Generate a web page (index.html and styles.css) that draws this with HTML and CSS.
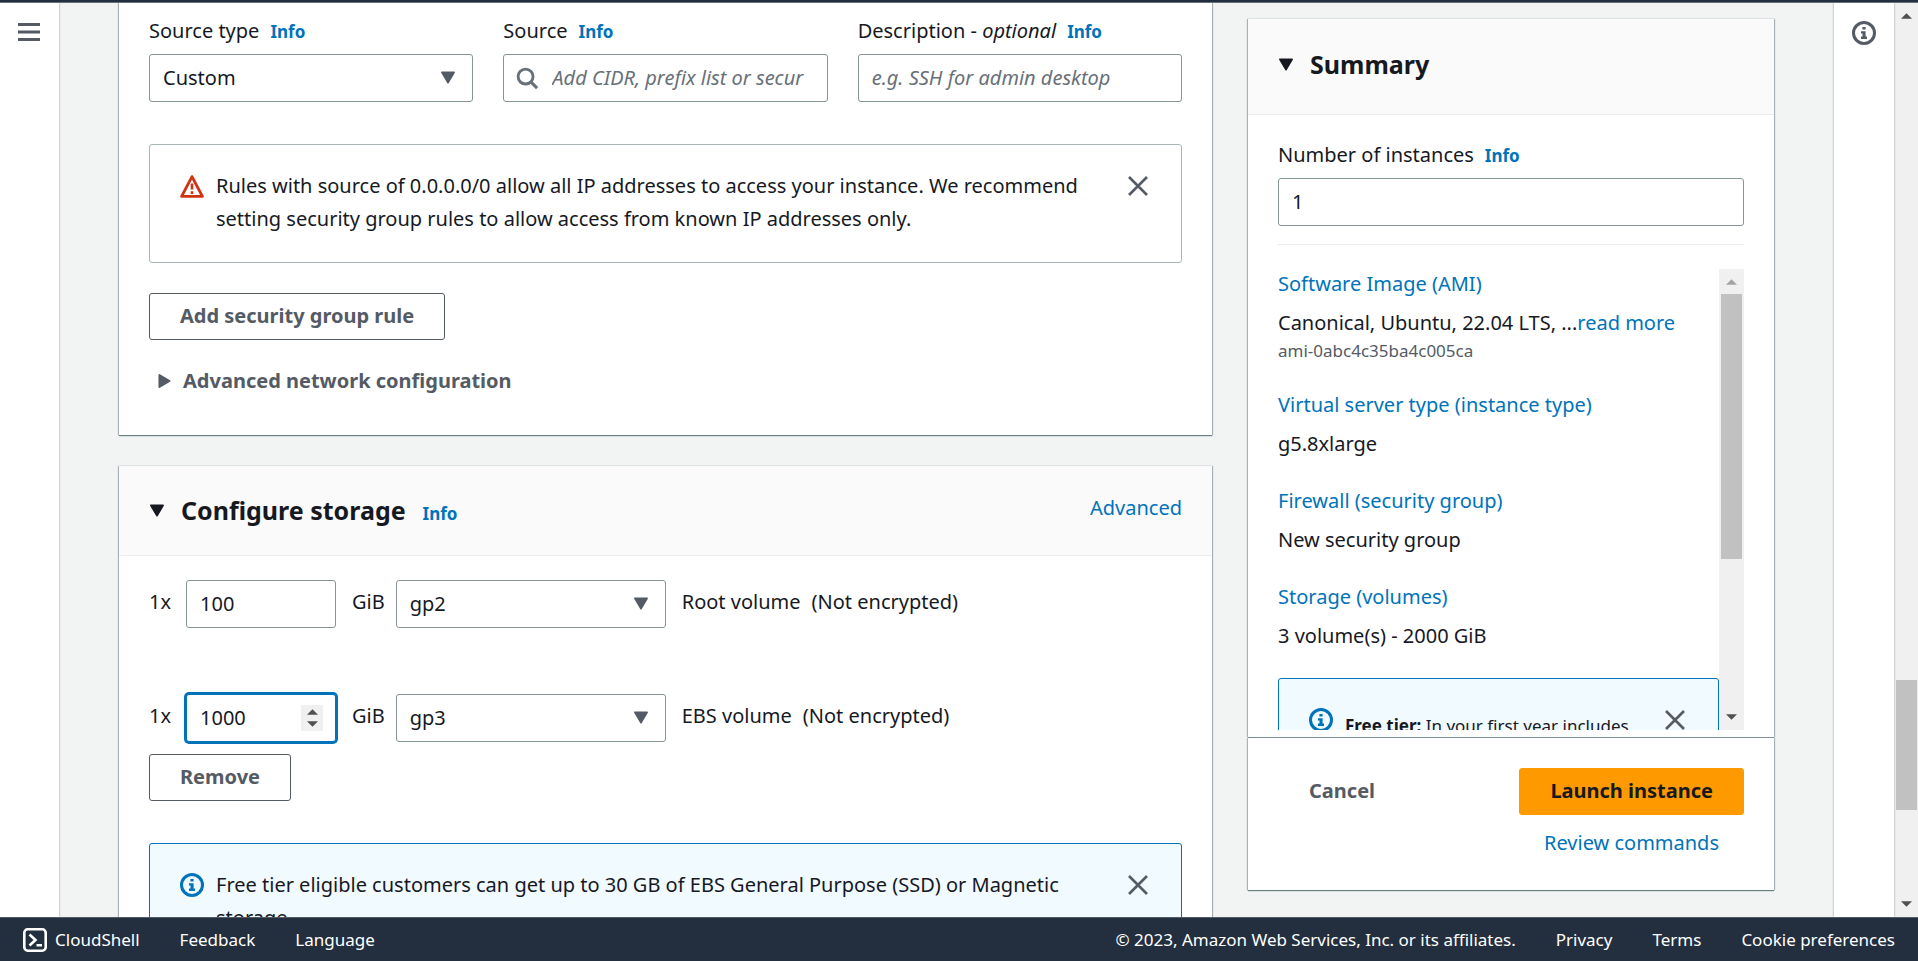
FILE: index.html
```html
<!DOCTYPE html>
<html lang="en">
<head>
<meta charset="utf-8">
<title>Launch an instance | EC2</title>
<link rel="stylesheet" href="styles.css">
</head>
<body>
<svg class="sprite" aria-hidden="true">
  <symbol id="i-caret" viewBox="0 0 16 14"><path d="M1.5 1.5h13L8 12.5z" fill="currentColor" stroke="currentColor" stroke-width="2" stroke-linejoin="round"/></symbol>
  <symbol id="i-right" viewBox="0 0 14 16"><path d="M1.5 1.5v13L12.5 8z" fill="currentColor" stroke="currentColor" stroke-width="2" stroke-linejoin="round"/></symbol>
  <symbol id="i-close" viewBox="0 0 20 20"><path d="M1 1l18 18M19 1L1 19" fill="none" stroke="currentColor" stroke-width="2.6"/></symbol>
  <symbol id="i-info" viewBox="0 0 24 24"><circle cx="12" cy="12" r="10.5" fill="none" stroke="currentColor" stroke-width="3"/><path d="M10.4 6h3.2v2.6h-3.2zM9 10.2h4.6v5.4H15V18H9v-2.4h1.5v-3H9z" fill="currentColor"/></symbol>
  <symbol id="i-warn" viewBox="0 0 24 24"><path d="M12 2.6L22.4 22.4H1.6z" fill="none" stroke="currentColor" stroke-width="2.8" stroke-linejoin="round"/><path d="M12 9.4v6.2M12 17.2v2.8" fill="none" stroke="currentColor" stroke-width="2.6"/></symbol>
  <symbol id="i-search" viewBox="0 0 24 24"><circle cx="10" cy="10" r="7.8" fill="none" stroke="currentColor" stroke-width="3"/><path d="M15.5 15.5l6.5 6.5" fill="none" stroke="currentColor" stroke-width="3.2"/></symbol>
  <symbol id="i-menu" viewBox="0 0 22 18"><path d="M0 1.5h22M0 9h22M0 16.5h22" stroke="currentColor" stroke-width="2.8"/></symbol>
  <symbol id="i-shell" viewBox="0 0 24 24"><rect x="1.3" y="1.3" width="21.4" height="21.4" rx="3.4" fill="none" stroke="currentColor" stroke-width="2.6"/><path d="M6.5 6.5l6 5.5-6 5.5M13.5 17.3h5.5" fill="none" stroke="currentColor" stroke-width="2.6"/></symbol>
  <symbol id="i-tri" viewBox="0 0 12 6"><path d="M0 6L6 0l6 6z" fill="currentColor"/></symbol>
</svg>

<div class="topbar"></div>

<div class="shell">
  <nav class="rail rail-left">
    <button class="icon-btn" aria-label="Open navigation"><svg class="menu-icon"><use href="#i-menu"/></svg></button>
  </nav>

  <main class="content">
    <div class="forms">
      <section class="card card-network">
        <div class="fields">
          <div class="field">
            <div class="label-row"><label for="stype">Source type</label><a class="info" href="#">Info</a></div>
            <div class="select"><select id="stype"><option>Custom</option></select><svg class="caret"><use href="#i-caret"/></svg></div>
          </div>
          <div class="field">
            <div class="label-row"><label for="src">Source</label><a class="info" href="#">Info</a></div>
            <div class="search"><svg class="search-icon"><use href="#i-search"/></svg><input class="input" id="src" type="text" placeholder="Add CIDR, prefix list or secur"></div>
          </div>
          <div class="field">
            <div class="label-row"><label for="desc">Description - <i>optional</i></label><a class="info" href="#">Info</a></div>
            <input class="input" id="desc" type="text" placeholder="e.g. SSH for admin desktop">
          </div>
        </div>

        <div class="alert alert-warn">
          <svg class="alert-icon"><use href="#i-warn"/></svg>
          <p class="alert-text">Rules with source of 0.0.0.0/0 allow all IP addresses to access your instance. We recommend setting security group rules to allow access from known IP addresses only.</p>
          <button class="icon-btn" aria-label="Dismiss"><svg class="close-icon"><use href="#i-close"/></svg></button>
        </div>

        <button class="btn">Add security group rule</button>
        <button class="expander"><svg class="right-icon"><use href="#i-right"/></svg>Advanced network configuration</button>
      </section>

      <section class="card card-storage">
        <header class="card-head">
          <svg class="caret"><use href="#i-caret"/></svg>
          <h2>Configure storage</h2>
          <a class="info" href="#">Info</a>
          <a class="link head-link" href="#">Advanced</a>
        </header>
        <div class="card-body">
          <div class="volume">
            <label for="v1">1x</label>
            <input class="input size" id="v1" type="number" value="100">
            <label for="t1">GiB</label>
            <div class="select type"><select id="t1"><option>gp2</option></select><svg class="caret"><use href="#i-caret"/></svg></div>
            <span>Root volume</span><span>(Not encrypted)</span>
          </div>
          <div class="volume volume-next">
            <label for="v2">1x</label>
            <div class="stepper">
              <input class="input size focused" id="v2" type="number" value="1000">
              <span class="spin"><svg class="tri"><use href="#i-tri"/></svg><svg class="tri down"><use href="#i-tri"/></svg></span>
            </div>
            <label for="t2">GiB</label>
            <div class="select type"><select id="t2"><option>gp3</option></select><svg class="caret"><use href="#i-caret"/></svg></div>
            <span>EBS volume</span><span>(Not encrypted)</span>
          </div>
          <button class="btn btn-remove">Remove</button>
          <div class="alert alert-info">
            <svg class="alert-icon"><use href="#i-info"/></svg>
            <p class="alert-text">Free tier eligible customers can get up to 30 GB of EBS General Purpose (SSD) or Magnetic storage</p>
            <button class="icon-btn" aria-label="Dismiss"><svg class="close-icon"><use href="#i-close"/></svg></button>
          </div>
        </div>
      </section>
    </div>

    <aside class="summary">
      <section class="card summary-card">
        <header class="card-head summary-head">
          <svg class="caret"><use href="#i-caret"/></svg>
          <h2>Summary</h2>
        </header>
        <div class="summary-body">
          <div class="label-row"><label for="count">Number of instances</label><a class="info" href="#">Info</a></div>
          <input class="input" id="count" type="number" value="1">
          <hr class="rule">
          <div class="scroller">
            <div class="scroll-view">
              <dl class="facts">
                <dt><a class="link" href="#">Software Image (AMI)</a></dt>
                <dd>Canonical, Ubuntu, 22.04 LTS, ...<a class="link" href="#">read more</a><small>ami-0abc4c35ba4c005ca</small></dd>
                <dt><a class="link" href="#">Virtual server type (instance type)</a></dt>
                <dd>g5.8xlarge</dd>
                <dt><a class="link" href="#">Firewall (security group)</a></dt>
                <dd>New security group</dd>
                <dt><a class="link" href="#">Storage (volumes)</a></dt>
                <dd>3 volume(s) - 2000 GiB</dd>
              </dl>
              <div class="alert alert-info alert-tier">
                <svg class="alert-icon"><use href="#i-info"/></svg>
                <p class="alert-text tier-text"><b>Free tier:</b> In your first year includes</p>
                <button class="icon-btn" aria-label="Dismiss"><svg class="close-icon"><use href="#i-close"/></svg></button>
              </div>
            </div>
            <div class="bar">
              <svg class="tri faded"><use href="#i-tri"/></svg>
              <div class="track"><div class="thumb thumb-inner"></div></div>
              <svg class="tri down"><use href="#i-tri"/></svg>
            </div>
          </div>
        </div>
      </section>
      <section class="card actions">
        <div class="action-row">
          <button class="btn btn-plain">Cancel</button>
          <button class="btn btn-primary">Launch instance</button>
        </div>
        <a class="link review" href="#">Review commands</a>
      </section>
    </aside>
  </main>

  <aside class="rail rail-right">
    <button class="icon-btn" aria-label="Open help panel"><svg class="alert-icon"><use href="#i-info"/></svg></button>
  </aside>
  <div class="bar page-bar">
    <svg class="tri"><use href="#i-tri"/></svg>
    <div class="track page-track"><div class="thumb thumb-page"></div></div>
    <svg class="tri down"><use href="#i-tri"/></svg>
  </div>
</div>

<footer class="footer">
  <div class="foot-group">
    <a class="foot-shell" href="#"><svg class="shell-icon"><use href="#i-shell"/></svg>CloudShell</a>
    <a href="#">Feedback</a>
    <a href="#">Language</a>
  </div>
  <div class="foot-group">
    <span>© 2023, Amazon Web Services, Inc. or its affiliates.</span>
    <a href="#">Privacy</a>
    <a href="#">Terms</a>
    <a href="#">Cookie preferences</a>
  </div>
</footer>
</body>
</html>
```
FILE: styles.css
```css
* { box-sizing: border-box; }

body {
  margin: 0;
  height: 100vh;
  overflow: hidden;
  display: flex;
  flex-direction: column;
  font-family: "Noto Sans", "Open Sans", sans-serif;
  font-size: 20px;
  line-height: 33px;
  color: #16191f;
  background: #f2f3f3;
}

.sprite { display: none; }
svg { flex: none; display: block; }
a { text-decoration: none; color: inherit; }
button, input, select { font: inherit; color: inherit; }
p, h2, dl, dd { margin: 0; }

.topbar { flex: none; height: 3px; background: #232f3e; border-bottom: 1px solid #687078; }

.shell { flex: 1; min-height: 0; display: flex; overflow: hidden; }

.rail { flex: none; background: #fff; color: #545b64; padding-top: 17px; box-shadow: 0 0 2px #879596; z-index: 1; }
.rail-left { width: 59px; padding-left: 18px; }
.rail-right { width: 60px; padding-left: 18px; }
.icon-btn { border: 0; background: none; padding: 0; color: #545b64; flex: none; }
.rail .icon-btn { display: block; }
.menu-icon { width: 22px; height: 18px; margin-top: 3px; }

.content { flex: 1; min-width: 0; display: flex; gap: 36px; padding: 0 60px; }
.forms { flex: 1; min-width: 0; }

.card { background: #fff; box-shadow: 0 1px 1px #687f83, -1px 0 1px #b4bdc0, 1px 0 1px #b4bdc0; }
.card-network { padding: 11px 30px 38px; }

.fields { display: grid; grid-template-columns: repeat(3, 1fr); gap: 30px; }
.label-row { display: flex; align-items: baseline; gap: 11px; }
.field { min-width: 0; }
.field .label-row { margin-bottom: 6px; }
.info { color: #0073bb; font-weight: 700; font-size: 17px; }
.link { color: #0073bb; }

.input, .select select {
  display: block;
  width: 100%;
  height: 48px;
  border: 1px solid #879596;
  border-radius: 3px;
  background: #fff;
  padding: 0 13px 2px;
  appearance: none;
}
.input[type="number"] { appearance: textfield; }
.input::-webkit-inner-spin-button { display: none; }
.input::placeholder { color: #687078; font-style: italic; opacity: 1; }
.select { position: relative; }
.caret { width: 16px; height: 13px; }
.select .caret { position: absolute; right: 17px; top: 17px; color: #545b64; pointer-events: none; }
.search { position: relative; }
.search .input { padding-left: 48px; }
.search-icon { position: absolute; left: 13px; top: 13px; width: 23px; height: 23px; color: #687078; }

.alert { display: flex; align-items: flex-start; border: 1px solid #aab7b8; border-radius: 3px; padding: 24px 33px 27px 30px; }
.alert-icon { width: 24px; height: 24px; margin-top: 5px; }
.rail .alert-icon { margin-top: 1px; }
.alert-text { flex: 1; padding: 0 30px 0 12px; }
.alert-warn { margin: 42px 0 30px; }
.alert-warn .alert-icon { color: #d13212; }
.alert-info { border-color: #0073bb; background: #f1faff; }
.alert-info .alert-icon { color: #0073bb; }
.close-icon { width: 20px; height: 20px; margin-top: 7px; }

.btn {
  display: block;
  height: 47px;
  padding: 0 30px 2px;
  border: 1px solid #545b64;
  border-radius: 3px;
  background: #fff;
  color: #545b64;
  font-weight: 700;
}
.expander { display: flex; align-items: center; gap: 12px; margin-top: 24px; padding: 0 0 0 9px; border: 0; background: none; color: #545b64; font-weight: 700; }
.right-icon { width: 13px; height: 16px; }

.card-storage { margin-top: 31px; }
.card-head { display: flex; align-items: center; height: 90px; padding: 0 30px; background: #fafafa; border-bottom: 1px solid #eaeded; }
.card-head h2 { font-size: 25px; line-height: 33px; margin: 0 17px 0 16px; }
.card-head .info { padding-top: 6px; }
.head-link { margin-left: auto; padding-bottom: 6px; }

.card-body { padding: 24px 30px; }
.volume { display: flex; align-items: center; gap: 11px; }
.volume > label, .volume > span { padding-bottom: 5px; }
.volume > label:first-child { width: 26px; }
.size { width: 150px; }
.size + label, .stepper + label { margin-left: 5px; }
.type { width: 270px; }
.type + span { margin-left: 5px; }
.volume-next { margin-top: 66px; }
.stepper { position: relative; }
.focused { border-color: #0073bb; box-shadow: 0 0 0 2px #0073bb; }
.spin { position: absolute; right: 13px; top: 11px; width: 22px; height: 26px; background: #f0f0f0; color: #505050; display: flex; flex-direction: column; align-items: center; justify-content: center; gap: 6px; }
.tri { width: 11px; height: 6px; color: #505050; }
.tri.down { transform: rotate(180deg); }
.tri.faded { color: #a3a3a3; }
.btn-remove { margin: 12px 0 42px; }

.summary { flex: none; width: 526px; display: flex; flex-direction: column; gap: 1px; padding: 16px 0 27px; }
.summary-card { flex: 1; min-height: 0; display: flex; flex-direction: column; }
.summary-head { flex: none; height: 96px; padding-bottom: 4px; }
.summary-body { flex: 1; min-height: 0; display: flex; flex-direction: column; padding: 23px 30px 7px; }
.summary-body .label-row { margin-bottom: 6px; }
.summary-body .input { flex: none; }
.rule { flex: none; width: 100%; margin: 18px 0 24px; border: 0; border-top: 1px solid #eaeded; }
.scroller { flex: 1; min-height: 0; display: flex; overflow: hidden; }
.scroll-view { flex: 1; overflow: hidden; }
.facts dt, .facts dd { line-height: 30px; }
.facts dd { margin: 9px 0 27px; }
.facts small { display: block; font-size: 17px; color: #545b64; line-height: 25px; }
.alert-tier { padding-right: 33px; }
.tier-text { font-size: 17px; line-height: 45px; padding-right: 0; white-space: nowrap; }

.bar { flex: none; width: 25px; background: #f0f0f0; display: flex; flex-direction: column; align-items: center; padding: 10px 0; }
.track { flex: 1; width: 21px; padding-top: 9px; }
.thumb { background: #c1c1c1; width: 21px; }
.thumb-inner { height: 63%; }
.page-bar { width: 24px; }
.page-track { display: flex; flex-direction: column; justify-content: flex-end; padding-bottom: 91px; }
.thumb-page { height: 130px; }

.actions { flex: none; height: 152px; padding: 30px 30px; }
.action-row { display: flex; justify-content: space-between; }
.btn-plain { border-color: transparent; }
.btn-primary { background: #ff9900; border-color: #ff9900; color: #16191f; }
.review { display: block; margin-top: 11px; padding-right: 25px; text-align: right; }

.footer { flex: none; height: 44px; display: flex; align-items: center; justify-content: space-between; padding: 0 23px; background: #232f3e; color: #fff; font-size: 17px; border-top: 1px solid #545b64; }
.foot-group { display: flex; align-items: center; gap: 40px; }
.foot-shell { display: flex; align-items: center; gap: 8px; }
.shell-icon { width: 24px; height: 24px; }
```
